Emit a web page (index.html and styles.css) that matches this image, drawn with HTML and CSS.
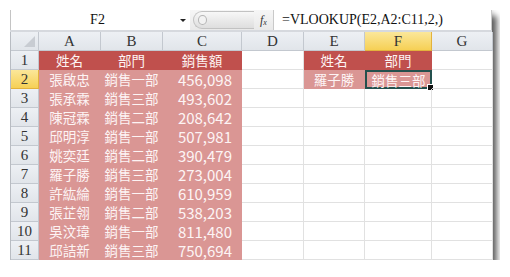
FILE: index.html
```html
<!DOCTYPE html>
<html lang="zh-Hant">
<head>
    <meta charset="UTF-8">
    <title>VLOOKUP</title>
    <link rel="stylesheet" href="styles.css">
</head>
<body>
    <div class="window">
        <div class="formula-bar">
            <div class="name-box">
                <span class="name">F2</span>
                <span class="drop"></span>
            </div>
            <div class="middle">
                <div class="pill"><span class="knob"></span></div>
                <span class="fx">f<sub>x</sub></span>
            </div>
            <div class="formula">=VLOOKUP(E2,A2:C11,2,)</div>
        </div>

        <div class="sheet">
            <div class="hd corner"><span class="tri"></span></div>
            <div class="hd">A</div>
            <div class="hd">B</div>
            <div class="hd">C</div>
            <div class="hd">D</div>
            <div class="hd">E</div>
            <div class="hd active">F</div>
            <div class="hd">G</div>

            <div class="rh">1</div>
            <div class="c dark">姓名</div>
            <div class="c dark">部門</div>
            <div class="c dark">銷售額</div>
            <div class="c"></div>
            <div class="c dark">姓名</div>
            <div class="c dark">部門</div>
            <div class="c"></div>

            <div class="rh active">2</div>
            <div class="c light">張啟忠</div>
            <div class="c light">銷售一部</div>
            <div class="c light num">456,098</div>
            <div class="c"></div>
            <div class="c light">羅子勝</div>
            <div class="c light selected">銷售三部<span class="handle"></span></div>
            <div class="c"></div>

            <div class="rh">3</div>
            <div class="c light">張承霖</div>
            <div class="c light">銷售三部</div>
            <div class="c light num">493,602</div>
            <div class="c"></div><div class="c"></div><div class="c"></div><div class="c"></div>

            <div class="rh">4</div>
            <div class="c light">陳冠霖</div>
            <div class="c light">銷售二部</div>
            <div class="c light num">208,642</div>
            <div class="c"></div><div class="c"></div><div class="c"></div><div class="c"></div>

            <div class="rh">5</div>
            <div class="c light">邱明淳</div>
            <div class="c light">銷售一部</div>
            <div class="c light num">507,981</div>
            <div class="c"></div><div class="c"></div><div class="c"></div><div class="c"></div>

            <div class="rh">6</div>
            <div class="c light">姚奕廷</div>
            <div class="c light">銷售二部</div>
            <div class="c light num">390,479</div>
            <div class="c"></div><div class="c"></div><div class="c"></div><div class="c"></div>

            <div class="rh">7</div>
            <div class="c light">羅子勝</div>
            <div class="c light">銷售三部</div>
            <div class="c light num">273,004</div>
            <div class="c"></div><div class="c"></div><div class="c"></div><div class="c"></div>

            <div class="rh">8</div>
            <div class="c light">許紘綸</div>
            <div class="c light">銷售一部</div>
            <div class="c light num">610,959</div>
            <div class="c"></div><div class="c"></div><div class="c"></div><div class="c"></div>

            <div class="rh">9</div>
            <div class="c light">張芷翎</div>
            <div class="c light">銷售二部</div>
            <div class="c light num">538,203</div>
            <div class="c"></div><div class="c"></div><div class="c"></div><div class="c"></div>

            <div class="rh">10</div>
            <div class="c light">吳汶瑋</div>
            <div class="c light">銷售一部</div>
            <div class="c light num">811,480</div>
            <div class="c"></div><div class="c"></div><div class="c"></div><div class="c"></div>

            <div class="rh">11</div>
            <div class="c light">邱詰新</div>
            <div class="c light">銷售三部</div>
            <div class="c light num">750,694</div>
            <div class="c"></div><div class="c"></div><div class="c"></div><div class="c"></div>
        </div>
    </div>
</body>
</html>
```

FILE: styles.css
```css
body {
    margin: 10px;
    background-color: #ffffff;
}

.window {
    width: 482px;
    background-color: #ffffff;
    box-shadow: 0 -1px 6px rgba(0, 0, 0, 0.18), 5px 6px 6px rgba(0, 0, 0, 0.6);
}

/* formula bar */

.formula-bar {
    display: flex;
    height: 20px;
    border-bottom: 2px solid #d6d9de;
    font-family: 'Liberation Serif', 'DejaVu Serif', serif;
}

.name-box {
    width: 180px;
    display: flex;
    align-items: center;
    border-left: 1px solid #c4c4c4;
    box-sizing: border-box;
}

.name {
    flex: 1;
    text-align: center;
    font-size: 14px;
    color: #111111;
    padding-left: 4px;
}

.drop {
    width: 0;
    height: 0;
    border-left: 3px solid transparent;
    border-right: 3px solid transparent;
    border-top: 3px solid #222222;
    margin-right: 4px;
}

.middle {
    width: 83px;
    display: flex;
    align-items: center;
    background: linear-gradient(#f6f6f6, #e9e9e9);
}

.pill {
    width: 60px;
    height: 16px;
    margin-left: 3px;
    border: 1px solid #c2c2c2;
    border-right: none;
    border-radius: 9px 0 0 9px;
    background: linear-gradient(#f7f7f7, #dedede);
    display: flex;
    align-items: center;
}

.knob {
    width: 7px;
    height: 8px;
    margin-left: 4px;
    border: 1px solid #b4b4b4;
    border-radius: 50%;
    background-color: #f2f2f2;
}

.fx {
    font-style: italic;
    font-size: 12px;
    color: #333333;
    margin-left: 6px;
}

.fx sub {
    font-size: 8px;
    vertical-align: -1px;
}

.formula {
    flex: 1;
    border-left: 1px solid #c9c9c9;
    border-right: 1px solid #c9c9c9;
    font-size: 14px;
    line-height: 20px;
    padding-left: 8px;
    color: #111111;
}

/* sheet grid */

.sheet {
    display: grid;
    grid-template-columns: 28px 62px 62px 79px 62px 61px 67px 61px;
    grid-auto-rows: 19px;
    border-left: 1px solid #b8bcc2;
}

.hd,
.rh {
    background: linear-gradient(#edf0f4, #e1e5ea);
    border-right: 1px solid #c3c8cf;
    border-bottom: 1px solid #c3c8cf;
    box-sizing: border-box;
    font-family: 'Liberation Serif', 'DejaVu Serif', serif;
    font-size: 15px;
    color: #333333;
    display: flex;
    align-items: center;
    justify-content: center;
}

.hd.active,
.rh.active {
    background: linear-gradient(#fbe79a, #f6d055);
    border-bottom-color: #e3b23c;
    border-right-color: #e3b23c;
}

.corner {
    justify-content: flex-end;
    align-items: flex-end;
}

.tri {
    width: 0;
    height: 0;
    border-left: 11px solid transparent;
    border-bottom: 11px solid #c8ccd2;
    margin: 0 3px 3px 0;
}

.c {
    border-right: 1px solid #e1e1e1;
    border-bottom: 1px solid #e1e1e1;
    box-sizing: border-box;
    font-family: 'Noto Sans CJK TC', 'Noto Sans', sans-serif;
    font-size: 13.5px;
    color: #fdf4f4;
    display: flex;
    align-items: center;
    justify-content: center;
    position: relative;
}

.dark {
    background-color: #c0504d;
    border-color: #c0504d;
}

.light {
    background-color: #da9694;
    border-color: #da9694;
}

.num {
    justify-content: flex-end;
    padding-right: 9px;
    font-size: 15px;
}

.selected {
    border: 2px solid #24504d;
}

.handle {
    position: absolute;
    right: -4px;
    bottom: -4px;
    width: 5px;
    height: 5px;
    background-color: #111111;
    border: 1px solid #ffffff;
}
```
